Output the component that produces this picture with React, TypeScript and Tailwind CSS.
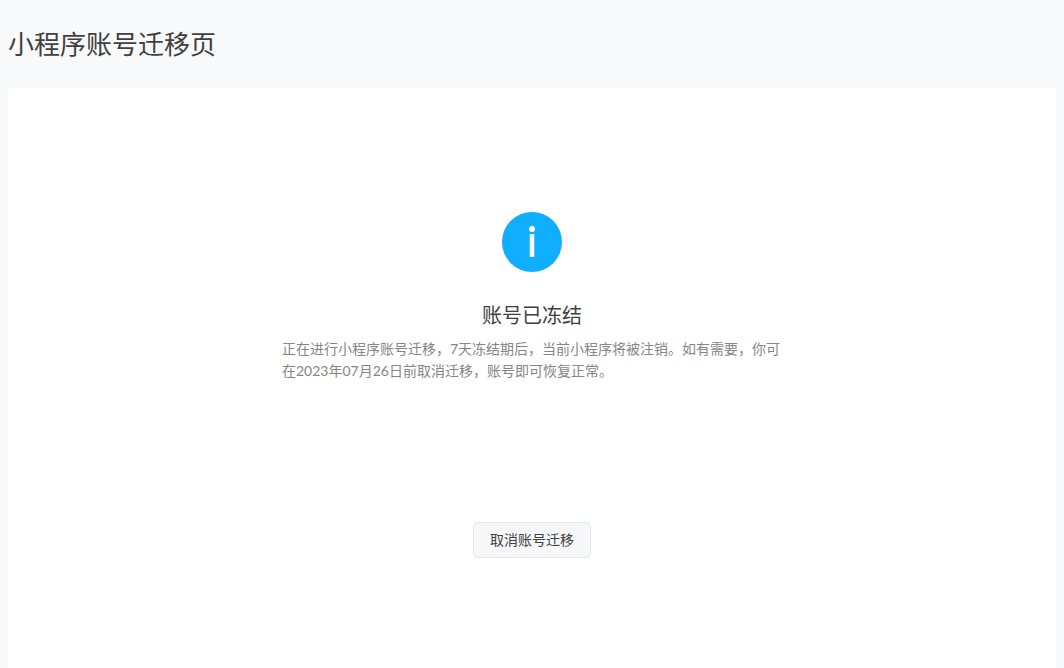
export default function App() {
  return (
    <div className="min-h-[668px] bg-[#f8f9fb] px-2 font-['Lato','Noto_Sans_CJK_SC',sans-serif]">
      <h1 className="h-[88px] pt-[28px] text-[26px] leading-[32px] font-normal text-[#404040]">小程序账号迁移页</h1>
      <main className="flex h-[580px] flex-col items-center rounded-t-[2px] bg-white pt-[124px]">
        <svg width="60" height="60" viewBox="0 0 60 60" aria-hidden="true">
          <circle cx="30" cy="30" r="30" fill="#10aeff" />
          <circle cx="30" cy="17" r="3" fill="#fff" />
          <rect x="27.75" y="22" width="4.5" height="23" fill="#fff" />
        </svg>
        <h2 className="mt-[30px] text-[20px] leading-[26px] font-normal text-[#404040]">账号已冻结</h2>
        <p className="mt-[10px] w-[500px] text-sm leading-[22px] text-[#858585]">正在进行小程序账号迁移，7天冻结期后，当前小程序将被注销。如有需要，你可在2023年07月26日前取消迁移，账号即可恢复正常。</p>
        <button className="mt-[140px] h-9 w-[118px] rounded-[4px] border border-[#e4e6e9] bg-[#f6f7f9] text-sm text-[#404040]">取消账号迁移</button>
      </main>
    </div>
  );
}
